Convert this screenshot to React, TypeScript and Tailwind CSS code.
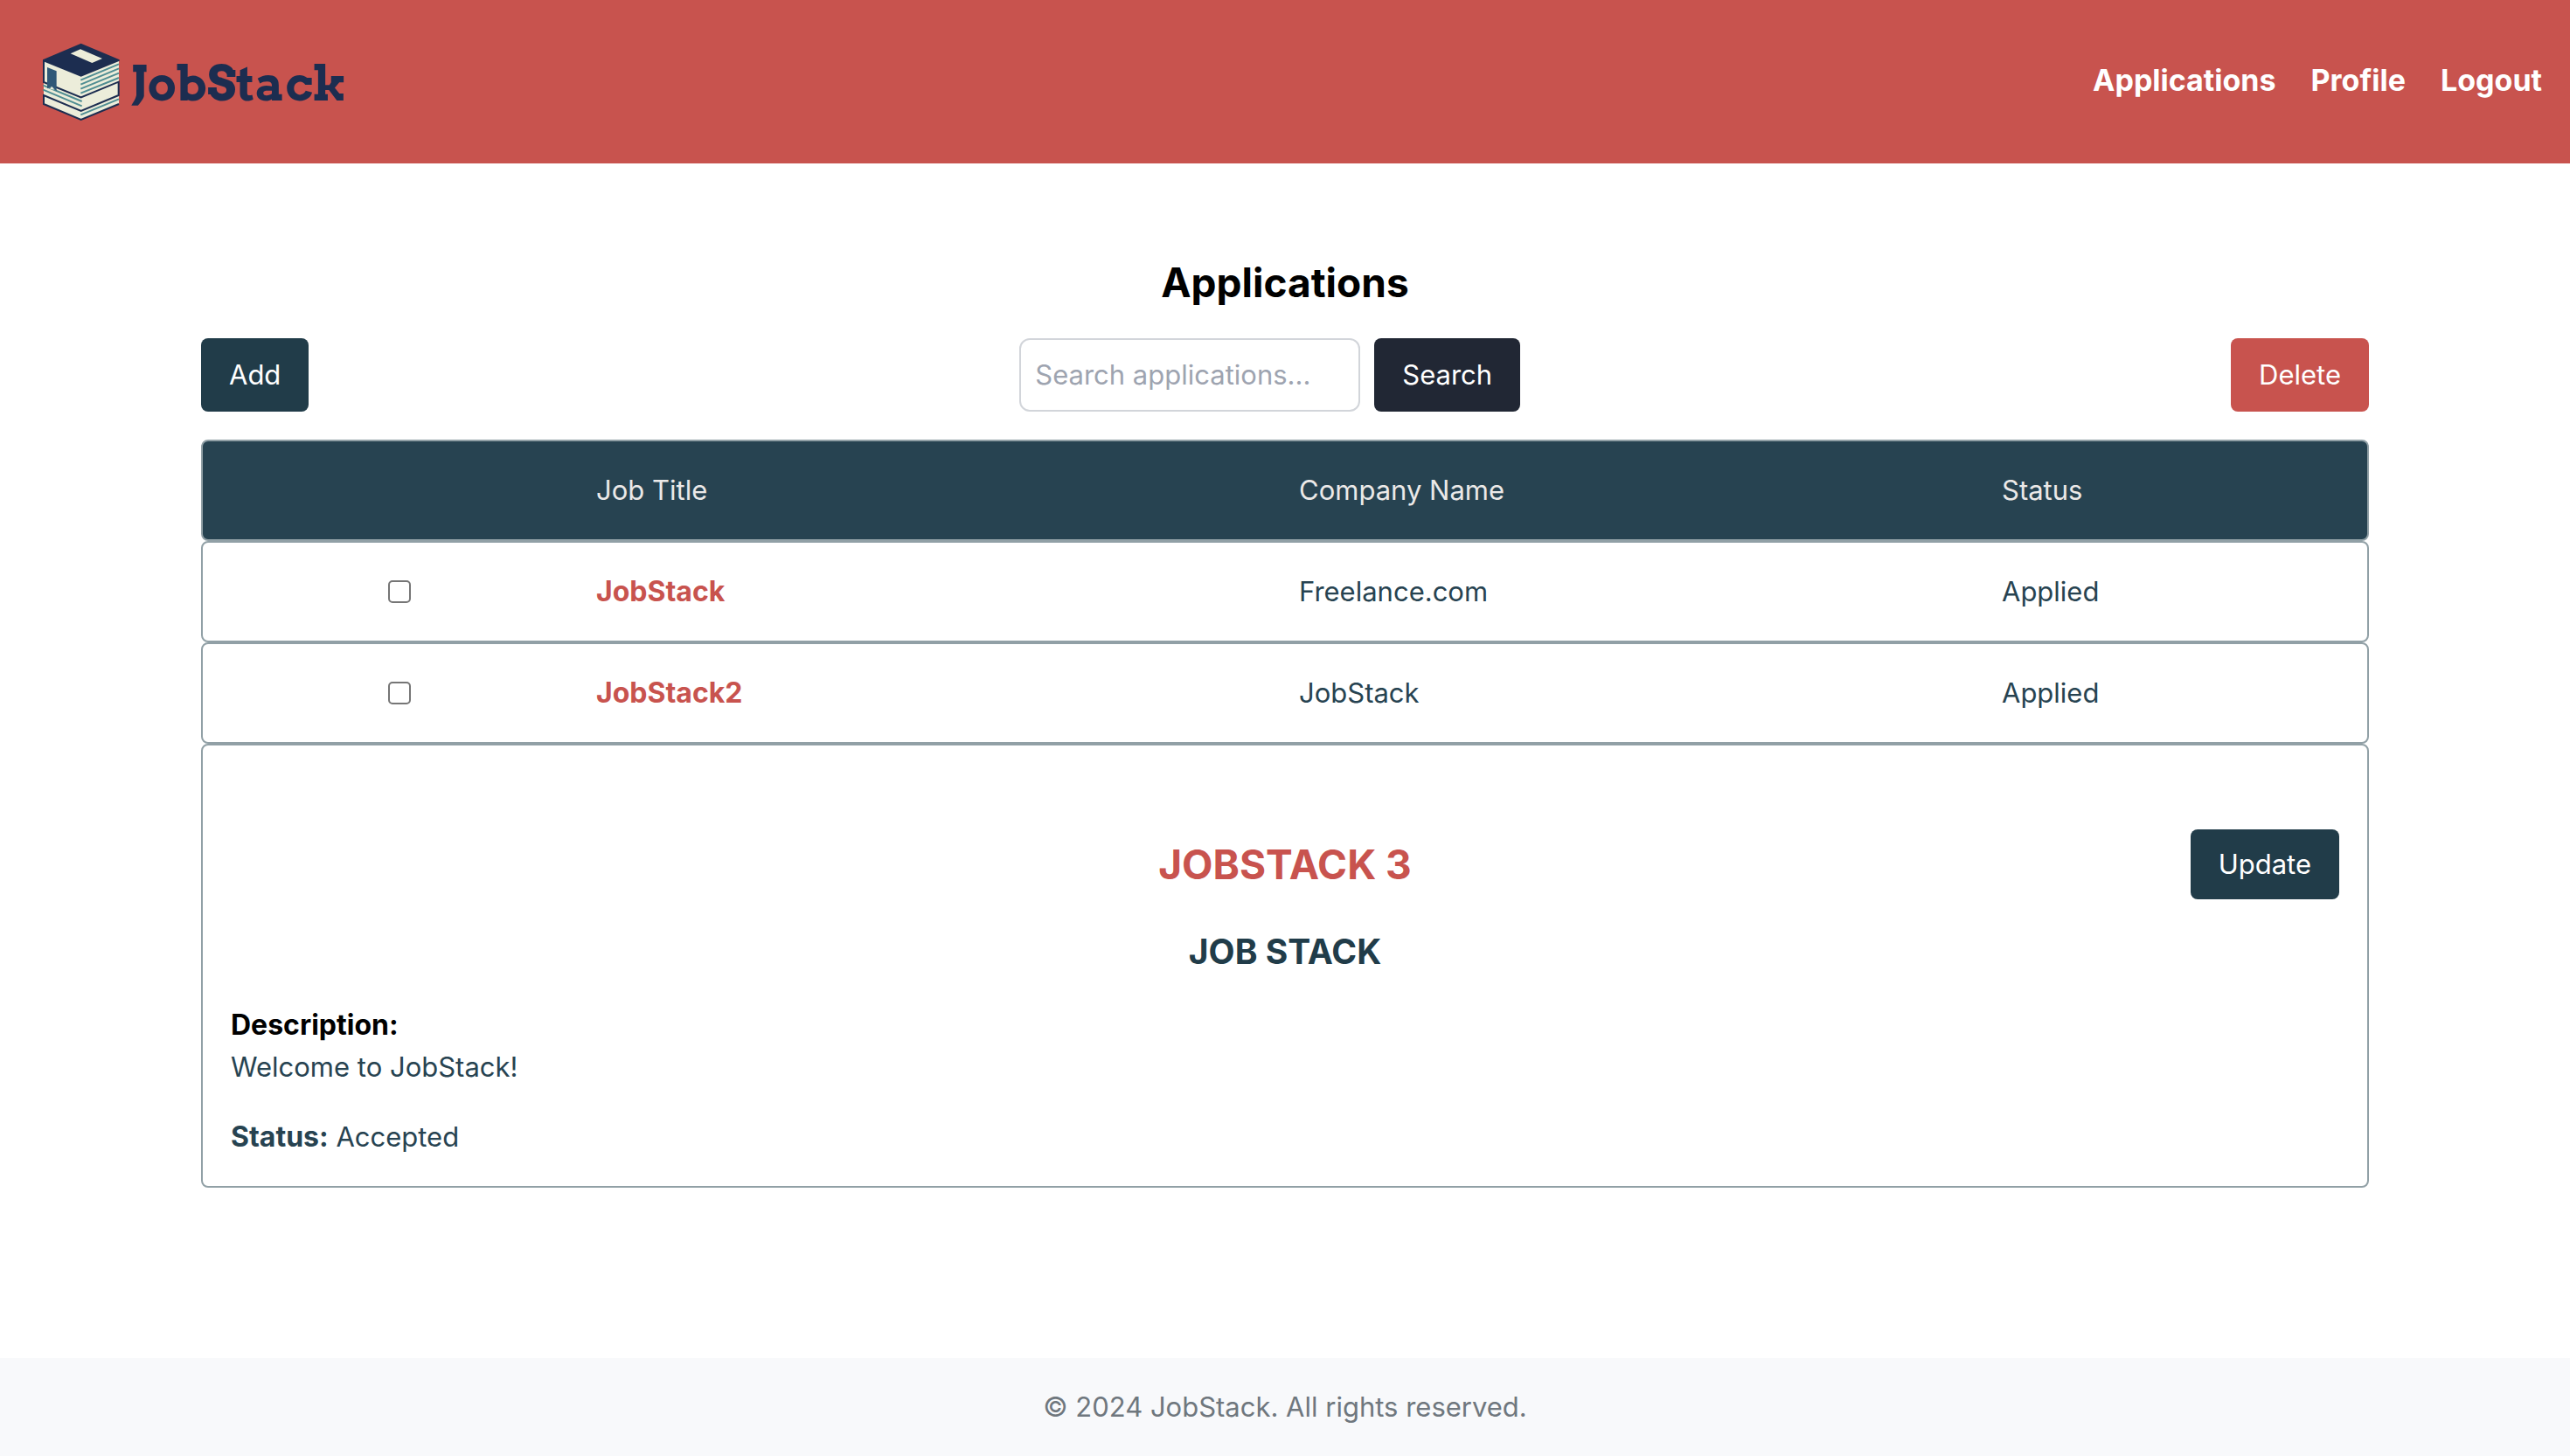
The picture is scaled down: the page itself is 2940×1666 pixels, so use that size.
import { useState } from "react";

const NAV = ["Applications", "Profile", "Logout"];

const JOBS = [
  { title: "JobStack", company: "Freelance.com", status: "Applied" },
  { title: "JobStack2", company: "JobStack", status: "Applied" },
];

const ROW = "flex rounded-lg border-2 border-[#91a0a6] px-8 py-8";

function BooksIcon() {
  return (
    <svg viewBox="26 26 270 270" className="size-[90px] shrink-0" aria-hidden="true">
      {/* pages and covers */}
      <path d="M32 86 160 32 290 88V236L160 290 32 236Z" fill="#ecedda" />
      <g stroke="#4f8d92" strokeWidth="6" fill="none">
        <path d="M159 154 290 99M159 169 290 114M159 184 290 130M159 199 290 146" />
        <path d="M30 172 163 227M30 187 163 243" />
        <path d="M159 273 290 219" />
      </g>
      <g stroke="#1c2d50" strokeWidth="6" fill="none" strokeLinejoin="miter">
        <path d="M32 84V161L160 213 289 160V206L160 260 32 206V236L160 290 290 236" />
      </g>
      <path d="M160 28 292 84V88L160 142 29 89V84Z" fill="#1c2d50" />
      <path d="M158 48 233 80 198 95 124 63Z" fill="#ecedda" />
      <path d="M44 110 76 123V192L60 177 44 183Z" fill="#305877" />
      <path d="M53 184 60 177 68 187Z" fill="#ecedda" />
    </svg>
  );
}

export default function App() {
  const [query, setQuery] = useState("");

  return (
    <div className="flex min-h-screen flex-col bg-white font-['Inter',sans-serif] text-[31px] leading-[48px] text-[#274351]">
      <header className="flex h-[187px] items-center justify-between bg-[#c8534e] px-8">
        <a href="#home" className="flex items-center gap-3 pl-4">
          <BooksIcon />
          <span className="pt-1 font-['Arvo','DejaVu_Serif',serif] text-[55px] leading-none font-bold text-[#1c2d50]">
            JobStack
          </span>
        </a>
        <nav className="flex gap-10 pb-1">
          {NAV.map((item) => (
            <a key={item} href={`#${item.toLowerCase()}`} className="text-[34px] font-bold text-white">
              {item}
            </a>
          ))}
        </nav>
      </header>

      <main className="mx-auto w-full max-w-[2560px] flex-1 px-10 pt-[104px]">
        <h1 className="mb-8 text-center text-[46px] leading-[64px] font-bold text-black">Applications</h1>

        <div className="mb-8 flex justify-between">
          <button type="button" className="rounded-lg bg-[#213c49] px-8 text-white">
            Add
          </button>
          <form className="flex gap-4" onSubmit={(e) => e.preventDefault()}>
            <input
              type="text"
              aria-label="Search applications"
              placeholder="Search applications..."
              value={query}
              onChange={(e) => setQuery(e.target.value)}
              className="w-[390px] rounded-xl border-2 border-[#d2d5da] p-4 placeholder:text-[#9ea4b0]"
            />
            <button type="submit" className="rounded-lg bg-[#212734] px-8 text-white">
              Search
            </button>
          </form>
          <button type="button" className="rounded-lg bg-[#c8534e] px-8 text-white">
            Delete
          </button>
        </div>

        <table className="block w-full">
          <thead className="block">
            <tr className={`${ROW} bg-[#274351] text-[#ebe9e8]`}>
              <td className="w-1/6" />
              <th scope="col" className="w-1/3 px-4 text-left font-normal">Job Title</th>
              <th scope="col" className="w-1/3 px-4 text-left font-normal">Company Name</th>
              <th scope="col" className="w-1/6 px-4 text-left font-normal">Status</th>
            </tr>
          </thead>
          <tbody className="block">
            {JOBS.map((job) => (
              <tr key={job.title} className={ROW}>
                <td className="flex w-1/6 items-center justify-center pr-4">
                  <input
                    type="checkbox"
                    aria-label={`Select ${job.title}`}
                    className="size-[26px] appearance-none rounded-[5px] border-2 border-[#767676] bg-white checked:bg-[#274351]"
                  />
                </td>
                <td className="w-1/3 px-4">
                  <a href="#job" className="text-[32px] font-bold text-[#c8534e]">{job.title}</a>
                </td>
                <td className="w-1/3 px-4">{job.company}</td>
                <td className="w-1/6 px-4">{job.status}</td>
              </tr>
            ))}
          </tbody>
        </table>

        <article className="rounded-lg border-2 border-[#91a0a6] px-8 pt-24 pb-8">
          <div className="grid grid-cols-[1fr_auto_1fr] items-center">
            <h2 className="col-start-2 text-[46px] leading-[64px] font-bold text-[#c8534e] uppercase">JobStack 3</h2>
            <button type="button" className="justify-self-end rounded-lg bg-[#213c49] px-8 py-4 text-white">
              Update
            </button>
          </div>
          <h3 className="my-8 text-center text-[39px] leading-[56px] font-bold text-[#213c49] uppercase">
            Job Stack
          </h3>
          <h4 className="text-[32px] font-bold text-black">Description:</h4>
          <p className="mb-8">Welcome to JobStack!</p>
          <p>
            <strong className="text-[32px] font-bold">Status:</strong> Accepted
          </p>
        </article>
      </main>

      <footer className="bg-[#f8f9fb] py-8 text-center text-[#6f777e]">
        © 2024 JobStack. All rights reserved.
      </footer>
    </div>
  );
}
